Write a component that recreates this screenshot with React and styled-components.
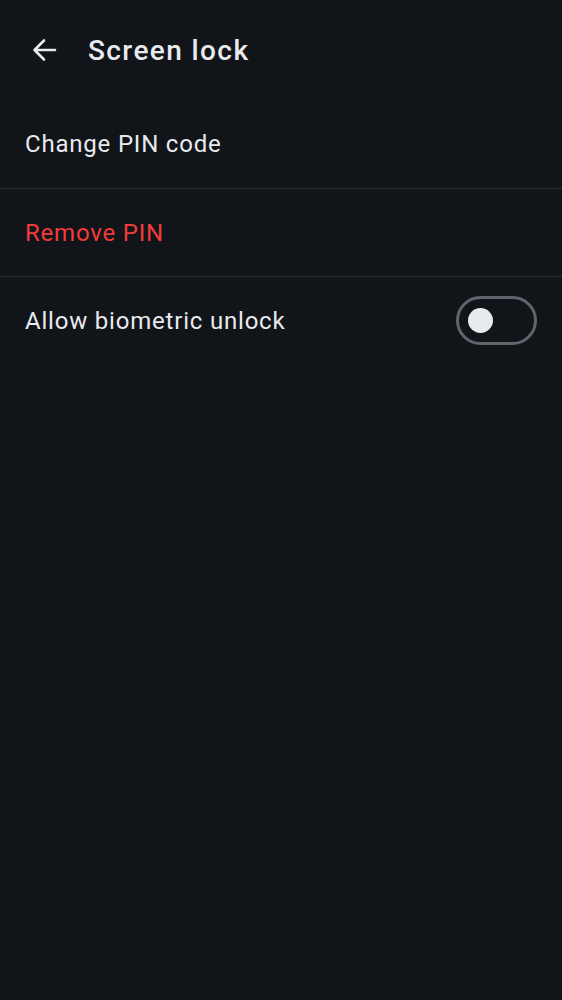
import React, { useState } from "react";
import styled, { createGlobalStyle } from "styled-components";

const Global = createGlobalStyle`
  html, body { margin: 0; padding: 0; background: #111419; }
  body { font-family: Roboto, "Noto Sans", sans-serif; -webkit-font-smoothing: antialiased; }
  * { box-sizing: border-box; }
`;

const Screen = styled.div`
  width: 562px;
  min-height: 1000px;
  background: #111419;
  color: #e8eaee;
  display: flex;
  flex-direction: column;
`;

const Header = styled.header`
  height: 100px;
  display: flex;
  align-items: center;
  padding: 0 0 0 24px;
  gap: 24px;
`;

const BackButton = styled.button`
  width: 40px;
  height: 40px;
  border: none;
  background: none;
  padding: 0;
  display: flex;
  align-items: center;
  justify-content: center;
  color: #e8eaee;
  cursor: pointer;
`;

const Title = styled.h1`
  margin: 0;
  font-size: 28px;
  font-weight: 500;
  letter-spacing: 1.4px;
  color: #e8eaee;
`;

const List = styled.div`
  display: flex;
  flex-direction: column;
`;

const Row = styled.div`
  height: 88px;
  display: flex;
  align-items: center;
  justify-content: space-between;
  padding: 0 25px;
  border-top: ${(p) => (p.$divider ? "1px solid #2a2d33" : "none")};
`;

const Label = styled.span`
  font-size: 24px;
  font-weight: 400;
  letter-spacing: 0.8px;
  color: ${(p) => (p.$danger ? "#f23b3b" : "#e8eaee")};
`;

const Toggle = styled.button`
  width: 81px;
  height: 49px;
  border-radius: 25px;
  border: 3px solid #60646b;
  background: transparent;
  padding: 0 0 0 9px;
  display: flex;
  align-items: center;
  cursor: pointer;
`;

const Knob = styled.span`
  width: 25px;
  height: 25px;
  border-radius: 50%;
  background: #e8eaee;
`;

export default function App() {
  const [bio, setBio] = useState(false);
  return (
    <Screen>
      <Global />
      <Header>
        <BackButton aria-label="Back">
          <svg width="26" height="26" viewBox="0 0 26 26" fill="none">
            <path
              d="M24 13H3.5M13 3.5 3.5 13l9.5 9.5"
              stroke="currentColor"
              strokeWidth="2.6"
              strokeLinecap="round"
              strokeLinejoin="round"
            />
          </svg>
        </BackButton>
        <Title>Screen lock</Title>
      </Header>
      <List>
        <Row>
          <Label>Change PIN code</Label>
        </Row>
        <Row $divider>
          <Label $danger>Remove PIN</Label>
        </Row>
        <Row $divider>
          <Label>Allow biometric unlock</Label>
          <Toggle aria-pressed={bio} onClick={() => setBio(!bio)}>
            <Knob />
          </Toggle>
        </Row>
      </List>
    </Screen>
  );
}
